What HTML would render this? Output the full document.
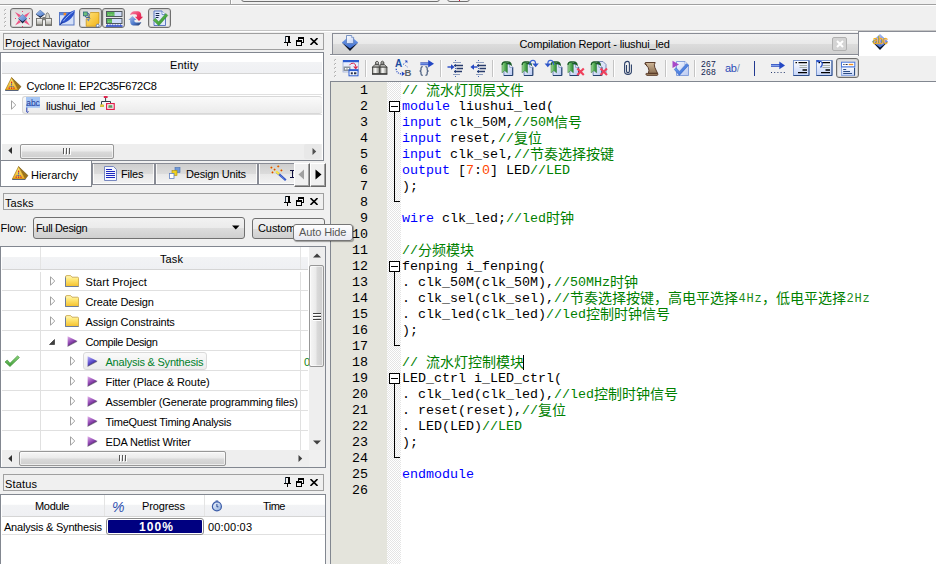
<!DOCTYPE html>
<html><head><meta charset="utf-8"><title>Quartus II</title>
<style>
html,body{margin:0;padding:0;}
body{width:936px;height:564px;overflow:hidden;position:relative;background:#f0f0f0;font-family:"Liberation Sans",sans-serif;font-size:11px;}
div,span.t,svg,pre{position:absolute;box-sizing:border-box;}
span.t{white-space:pre;line-height:13px;height:13px;}
.ttl{border:1px solid #a0a0a0;background:#f0f0f0;}
.pan{border:1px solid #828790;background:#fff;}
.hdr{background:linear-gradient(#fff 0,#fff 45%,#f2f3f5 46%,#eff0f3 100%);border-bottom:1px solid #d5d5d5;}
.hl{background:#e0e0e0;height:1px;}
.vl{background:#e0e0e0;width:1px;}
.sbt{border:1px solid #979797;border-radius:2px;background:linear-gradient(#f6f6f6,#eaeaea 48%,#dadada 52%,#cecece);box-shadow:inset 0 0 0 1px rgba(255,255,255,.6);}
.sbv{border:1px solid #979797;border-radius:2px;background:linear-gradient(90deg,#f6f6f6,#eaeaea 48%,#dadada 52%,#cecece);box-shadow:inset 0 0 0 1px rgba(255,255,255,.6);}
.tab{box-shadow:inset 1px 0 0 rgba(255,255,255,.8),inset -1px 0 0 rgba(255,255,255,.8),inset 0 -1px 0 rgba(255,255,255,.8);border:1px solid #898c95;background:linear-gradient(#cecece,#dcdcdc 50%,#e8e8e8 51%,#f3f3f3);}
.btn{border:1px solid #707070;border-radius:3px;background:linear-gradient(#f2f2f2,#ebebeb 50%,#dddddd 51%,#cfcfcf);}
.tb{border:1px solid #6f6f6f;border-radius:3px;background:linear-gradient(#dcdcdc,#efefef);box-shadow:inset 0 0 0 1px #cfcfcf;}
pre{margin:0;font-family:"Liberation Mono",monospace;font-size:13.333px;line-height:16px;height:16px;white-space:pre;color:#000;}
pre b{font-weight:normal;color:#0000ff;}
pre i{font-style:normal;color:#008000;}
pre u{text-decoration:none;color:#ff4500;}
pre .c{display:inline-block;position:relative;height:16px;vertical-align:top;font-family:"Liberation Mono","Noto Sans CJK SC",monospace;font-size:14px;line-height:16px;white-space:nowrap;color:#008000;}
pre .h{font-size:12px;letter-spacing:.8px;display:inline-block;width:24px;vertical-align:top;text-indent:.6px;color:#1a8a1a;}
.ln{text-align:right;width:38px;left:330px;}
</style></head><body>

<div style="left:0px;top:4px;width:936px;height:1px;background:#a0a0a0;"></div>
<div style="left:0px;top:5px;width:936px;height:1px;background:#fff;"></div>
<div style="left:230px;top:0px;width:1px;height:4px;background:#a0a0a0;"></div>
<div style="left:231px;top:0px;width:1px;height:4px;background:#fff;"></div>
<div style="left:241px;top:-10px;width:199px;height:12px;border:1px solid #707070;border-radius:3px;background:#f0f0f0;"></div>
<div style="left:447px;top:-10px;width:23px;height:12px;border:1px solid #707070;border-radius:3px;background:#f0f0f0;"></div>
<div style="left:459px;top:0px;width:1px;height:1px;background:#e0103a;"></div>
<div style="left:0px;top:30px;width:936px;height:1px;background:#c5c5c5;"></div>
<div style="left:0px;top:31px;width:936px;height:1px;background:#fff;"></div>
<div style="left:5px;top:9px;width:1px;height:1px;background:#b0b0b0;"></div>
<div style="left:4px;top:10px;width:1px;height:1px;background:#b8b8b8;"></div>
<div style="left:5px;top:10px;width:1px;height:1px;background:#fafafa;"></div>
<div style="left:4px;top:9px;width:1px;height:1px;background:#dcdcdc;"></div>
<div style="left:5px;top:13px;width:1px;height:1px;background:#b0b0b0;"></div>
<div style="left:4px;top:14px;width:1px;height:1px;background:#b8b8b8;"></div>
<div style="left:5px;top:14px;width:1px;height:1px;background:#fafafa;"></div>
<div style="left:4px;top:13px;width:1px;height:1px;background:#dcdcdc;"></div>
<div style="left:5px;top:17px;width:1px;height:1px;background:#b0b0b0;"></div>
<div style="left:4px;top:18px;width:1px;height:1px;background:#b8b8b8;"></div>
<div style="left:5px;top:18px;width:1px;height:1px;background:#fafafa;"></div>
<div style="left:4px;top:17px;width:1px;height:1px;background:#dcdcdc;"></div>
<div style="left:5px;top:21px;width:1px;height:1px;background:#b0b0b0;"></div>
<div style="left:4px;top:22px;width:1px;height:1px;background:#b8b8b8;"></div>
<div style="left:5px;top:22px;width:1px;height:1px;background:#fafafa;"></div>
<div style="left:4px;top:21px;width:1px;height:1px;background:#dcdcdc;"></div>
<div style="left:5px;top:25px;width:1px;height:1px;background:#b0b0b0;"></div>
<div style="left:4px;top:26px;width:1px;height:1px;background:#b8b8b8;"></div>
<div style="left:5px;top:26px;width:1px;height:1px;background:#fafafa;"></div>
<div style="left:4px;top:25px;width:1px;height:1px;background:#dcdcdc;"></div>
<div class="tb" style="left:10px;top:8px;width:23px;height:20px;"></div>
<div class="tb" style="left:79px;top:8px;width:23px;height:20px;"></div>
<div class="tb" style="left:102px;top:8px;width:23px;height:20px;"></div>
<div class="tb" style="left:148px;top:8px;width:23px;height:20px;"></div>
<svg style="left:0;top:6px" width="180" height="24" viewBox="0 6 180 24">
<defs>
<linearGradient id="dia" x1="0" y1="0" x2="1" y2="1"><stop offset="0" stop-color="#a8c4f0"/><stop offset="1" stop-color="#4a78c8"/></linearGradient>
<linearGradient id="yel" x1="0" y1="0" x2="1" y2="1"><stop offset="0" stop-color="#ffe27a"/><stop offset="1" stop-color="#f2b418"/></linearGradient>
<linearGradient id="grn" x1="0" y1="0" x2="1" y2="1"><stop offset="0" stop-color="#6cc858"/><stop offset="1" stop-color="#2c8c2c"/></linearGradient>
<linearGradient id="gry" x1="0" y1="0" x2="0" y2="1"><stop offset="0" stop-color="#fafafa"/><stop offset="1" stop-color="#a8a8a0"/></linearGradient>
</defs>
<!-- 1 -->
<g fill="#f0447a" opacity=".9"><path d="M15 12L18.9 17.6L20.9 15.3Z"/><path d="M30 12L24.1 15.3L26.1 17.6Z"/><path d="M15 25.6L20.9 22.3L18.9 20.0Z"/><path d="M30 25.6L26.1 20.0L24.1 22.3Z"/></g>
<g fill="#ee3f72"><rect x="22" y="11" width="1" height="1"/><rect x="22" y="26" width="1" height="1"/><rect x="15" y="18" width="1" height="1"/><rect x="29" y="18" width="1" height="1"/></g>
<path d="M22.6 14.3L27 18.8L22.6 23.6L18.2 18.8Z" fill="#14203c"/><path d="M22.6 14.3L27 18.6L22.6 21.6L18.2 18.6Z" fill="url(#dia)"/>
<!-- 2 -->
<path d="M40.3 10L44.9 14.2L40.3 18L35.8 14.2Z" fill="#14203c"/><path d="M40.3 10L44.9 14L40.3 16.4L35.8 14Z" fill="url(#dia)"/>
<rect x="36.5" y="18.5" width="6" height="6.5" fill="url(#gry)" stroke="#6a6a66" stroke-width=".9"/><rect x="45.5" y="18.5" width="6" height="6.5" fill="url(#gry)" stroke="#6a6a66" stroke-width=".9"/>
<path d="M45.5 18.5L46 14.5Q47.2 11 49 14.5L50 18.5Z" fill="#d4d4cc" stroke="#6a6a66" stroke-width=".8"/><rect x="42.5" y="17" width="3" height="3.2" fill="#7c7c78"/><path d="M36 25.3H43M45 25.3H52" stroke="#50504c" stroke-width=".8"/>
<!-- 3 -->
<rect x="59.5" y="12.5" width="14.5" height="12.5" fill="#d4e0f8" stroke="#5878c4"/><rect x="60" y="13" width="13.5" height="2.2" fill="#5a88e0"/><rect x="63.6" y="12.8" width="2.6" height="2.6" fill="#f08a28"/>
<path d="M60 24.8C61 19.5 66.5 12.5 74.8 10C75.2 15.5 69 22 62.2 23.6Z" fill="#2a50c8"/><path d="M63 21.5C66 17.5 70 14 73.5 11.5" stroke="#9cc0f8" stroke-width=".9" fill="none"/><path d="M59.8 25L63 21.5" stroke="#183088" stroke-width="1"/>
<!-- 4 -->
<path d="M90.5 12.5H99V23L96 26.3H86.2V19Z" fill="url(#yel)" stroke="#c08c10" stroke-width=".7"/><path d="M86.2 19V13H90.5Z" fill="#c4cce0"/>
<rect x="83.5" y="12" width="3.8" height="3.8" fill="#70c07c" stroke="#2a6c78" stroke-width=".8"/><path d="M87.5 13Q90 13.5 89 17L90 18.5M85 16Q85.5 18.5 89 17.5" stroke="#36588c" stroke-width="1" fill="none"/><path d="M86.5 19.5L90 18L88.8 21.5Z" fill="#6888b8"/>
<circle cx="97.7" cy="25.6" r="1.4" fill="#fff" stroke="#4468a8" stroke-width=".8"/>
<!-- 5 -->
<rect x="106.5" y="11.5" width="15.5" height="5" fill="#cfdcf8" stroke="#505860"/><rect x="107" y="12" width="7.5" height="4" fill="#58b458"/><path d="M108 14.8H113.5" stroke="#a8e0a0" stroke-width=".8" stroke-dasharray="1 .6"/>
<rect x="106.5" y="18.5" width="15.5" height="5" fill="#cfdcf8" stroke="#505860"/><rect x="107" y="19" width="5" height="4" fill="#58b458"/><path d="M108 21.8H111.5" stroke="#a8e0a0" stroke-width=".8" stroke-dasharray="1 .6"/>
<path d="M106 26H122.5" stroke="#1838c8" stroke-width="1.4"/><path d="M107 24.9H122" stroke="#1838c8" stroke-width=".9" stroke-dasharray="1 1.6"/>
<!-- 6 -->
<linearGradient id="rdg" x1="0" y1="0" x2="1" y2="1"><stop offset="0" stop-color="#f888a8"/><stop offset=".5" stop-color="#ec3864"/><stop offset="1" stop-color="#d81040"/></linearGradient>
<linearGradient id="blg" x1="0" y1="0" x2="1" y2="1"><stop offset="0" stop-color="#18305c"/><stop offset=".4" stop-color="#4c78cc"/><stop offset="1" stop-color="#b4c8ec"/></linearGradient>
<path id="swr" d="M130 14.9C131 12.5 132.5 11.2 134 11.2L138.2 11.2C140.6 11.5 141.5 14 141.3 16.7L143.1 16.7L139 20.9L134.9 16.7L137 16.7C137.2 15 136.5 14.2 135.2 14.2L133.5 14.2C132 14.2 131 14.5 130 14.9Z" fill="url(#rdg)"/>
<path transform="rotate(180 135.7 18.4)" d="M130 14.9C131 12.5 132.5 11.2 134 11.2L138.2 11.2C140.6 11.5 141.5 14 141.3 16.7L143.1 16.7L139 20.9L134.9 16.7L137 16.7C137.2 15 136.5 14.2 135.2 14.2L133.5 14.2C132 14.2 131 14.5 130 14.9Z" fill="url(#blg)"/>
<!-- 7 -->
<path d="M154 11H162L165.5 14.5V25.5H154Z" fill="#dfe8fb" stroke="#4c6cbc" stroke-width=".9"/><path d="M162 11V14.5H165.5" fill="#fff" stroke="#4c6cbc" stroke-width=".7"/>
<path d="M155.7 13.5H159.3M155.7 15.5H159.3M155.7 17.5H158.5" stroke="#182850" stroke-width="1"/>
<path d="M153.3 20.3L155.3 18.3L158.7 21.8L165.8 13.4L167.8 15.4L158.8 25.8Z" fill="url(#grn)" stroke="#2a7c24" stroke-width=".4"/>
</svg>
<div class="ttl" style="left:3px;top:33px;width:321px;height:17px;"></div>
<span class="t m" style="left:5px;top:37px;color:#000;font-size:11px;letter-spacing:0.04px;">Project Navigator</span>
<svg style="left:284px;top:36px;" width="7" height="10" viewBox="0 0 7 10"><g fill="#000" shape-rendering="crispEdges"><rect x="1" y="0" width="5" height="1"/><rect x="1" y="0" width="1" height="6" fill="#2c3c4c"/><rect x="4" y="0" width="2" height="6"/><rect x="0" y="6" width="7" height="1"/><rect x="3" y="7" width="1" height="3"/></g></svg>
<svg style="left:296px;top:37px;" width="8" height="9" viewBox="0 0 8 9"><g fill="#000" shape-rendering="crispEdges"><rect x="2" y="0" width="6" height="2"/><rect x="7" y="0" width="1" height="6"/><rect x="2" y="0" width="1" height="3"/><rect x="6" y="5" width="2" height="1"/><rect x="0" y="3" width="6" height="2"/><rect x="0" y="3" width="1" height="6"/><rect x="5" y="3" width="1" height="6"/><rect x="0" y="8" width="6" height="1"/></g></svg>
<svg style="left:310px;top:38px;" width="8" height="7" viewBox="0 0 8 7"><path d="M.5 .1L7.5 6.9M7.5 .1L.5 6.9" stroke="#000" stroke-width="1.6"/></svg>
<div style="left:0px;top:52px;width:324px;height:109px;border-bottom:1px solid #828790;border-top:1px solid #828790;border-right:1px solid #828790;border-left:1px solid #828790;background:#fff;"></div>
<div class="hdr" style="left:2px;top:53px;width:320px;height:21px;"></div>
<span class="t m" style="left:170px;top:59px;color:#000;font-size:11px;letter-spacing:0.18px;">Entity</span>
<div class="hl" style="left:2px;top:94px;width:320px;height:1px;"></div>
<div class="hl" style="left:2px;top:114px;width:320px;height:1px;"></div>
<svg style="left:5px;top:77px;" width="17" height="15" viewBox="0 0 17 15"><defs><linearGradient id="py77" x1="0" y1="0" x2="0" y2="1"><stop offset="0" stop-color="#fff27a"/><stop offset="1" stop-color="#f0ac1c"/></linearGradient></defs>
<path d="M6.6 .6L13.3 13L16 9.6Z" fill="#9c741c" stroke="#6c4c10" stroke-width=".5"/><path d="M6.6 .6L.4 13H13.3Z" fill="url(#py77)" stroke="#a47414" stroke-width=".7"/><path d="M.2 13.5H13.4" stroke="#58647c" stroke-width="1"/>
<rect x="6" y="4.6" width="1.2" height="1.6" fill="#e02020"/><path d="M6.6 6.4V8.4M5.4 9L4.4 10.4M7.8 9L8.8 10.4M6.6 9V10.4" stroke="#2848c0" stroke-width=".8"/><rect x="3.6" y="10.6" width="1.2" height="1.3" fill="#e02020"/><rect x="6" y="10.6" width="1.2" height="1.3" fill="#e02020"/><rect x="8.4" y="10.6" width="1.2" height="1.3" fill="#e02020"/></svg>
<span class="t m" style="left:26.5px;top:80px;color:#000;font-size:11px;letter-spacing:-0.21px;">Cyclone II: EP2C35F672C8</span>
<div style="left:22px;top:96px;width:300px;height:18px;border:1px solid #d8d8d8;border-radius:3px;background:linear-gradient(#fafafa,#ebebeb);border-right:none;"></div>
<svg style="left:11px;top:100px;" width="6" height="10" viewBox="0 0 6 10"><path d="M.5 .8L4.8 5L.5 9.2Z" fill="#fff" stroke="#a0a0a0"/></svg>
<svg style="left:26px;top:97px;" width="15" height="17" viewBox="0 0 15 17"><rect x="0" y="0" width="14" height="10.8" fill="#a6c6f4"/><text x="0.2" y="8.8" font-family="Liberation Sans" font-size="9.5" fill="#1c3898" textLength="13.6" lengthAdjust="spacingAndGlyphs">abc</text><path d="M0 8.4H14" stroke="#3c5cb8" stroke-width=".6"/>
<path d="M.8 10.5V15Q2 16 2.5 14.5" stroke="#2038b0" fill="none"/></svg>
<span class="t m" style="left:46px;top:100px;color:#000;font-size:11px;letter-spacing:-0.25px;">liushui_led</span>
<svg style="left:100px;top:95px" width="16" height="16" viewBox="100 95 16 16"><rect x="103.8" y="96" width="3.8" height="2" fill="#e02850"/>
<path d="M105.6 98V101.5M101.5 104.6V101.5H110.5V103" stroke="#34404c" fill="none" stroke-width="1"/>
<rect x="100.6" y="104.8" width="3.2" height="2" fill="#ecd028" stroke="#a89820" stroke-width=".4"/>
<rect x="106.6" y="103.6" width="7.6" height="5.8" fill="#fff" stroke="#e0204c" stroke-width="1.2"/><rect x="108.4" y="105.2" width="4" height="2.6" fill="#58a060"/><path d="M108.4 107.6H112.4" stroke="#8c9098" stroke-width=".6"/></svg>
<div style="left:2px;top:144px;width:320px;height:16px;background:#eeeeee;"></div>
<div class="sbt" style="left:20px;top:144px;width:94px;height:15px;"></div>
<svg style="left:62px;top:148px;" width="10" height="7" viewBox="0 0 10 7"><path d="M1.5 0V6M4.5 0V6M7.5 0V6" stroke="#585858" stroke-width="1"/><path d="M2.5 1V7M5.5 1V7M8.5 1V7" stroke="#fff" stroke-width="1"/></svg>
<svg style="left:8px;top:147px;" width="5" height="7" viewBox="0 0 5 7"><path d="M4 0V7L.3 3.5Z" fill="#303030"/></svg>
<div style="left:304px;top:144px;width:17px;height:15px;background:#e8e8e8;border-radius:2px;"></div>
<svg style="left:312px;top:148px;" width="5" height="7" viewBox="0 0 5 7"><path d="M.5 0V7L4.2 3.5Z" fill="#505050"/></svg>
<div class="tab" style="left:92px;top:163px;width:63px;height:22px;"></div>
<div class="tab" style="left:155px;top:163px;width:103px;height:22px;"></div>
<div class="tab" style="left:258px;top:163px;width:60px;height:22px;"></div>
<div style="left:0px;top:161px;width:92px;height:26px;background:#fff;border-left:1px solid #828790;border-right:1px solid #828790;border-bottom:1px solid #828790;"></div>
<svg style="left:12px;top:166px;" width="17" height="15" viewBox="0 0 17 15"><defs><linearGradient id="py166" x1="0" y1="0" x2="0" y2="1"><stop offset="0" stop-color="#fff27a"/><stop offset="1" stop-color="#f0ac1c"/></linearGradient></defs>
<path d="M6.6 .6L13.3 13L16 9.6Z" fill="#9c741c" stroke="#6c4c10" stroke-width=".5"/><path d="M6.6 .6L.4 13H13.3Z" fill="url(#py166)" stroke="#a47414" stroke-width=".7"/><path d="M.2 13.5H13.4" stroke="#58647c" stroke-width="1"/>
<rect x="6" y="4.6" width="1.2" height="1.6" fill="#e02020"/><path d="M6.6 6.4V8.4M5.4 9L4.4 10.4M7.8 9L8.8 10.4M6.6 9V10.4" stroke="#2848c0" stroke-width=".8"/><rect x="3.6" y="10.6" width="1.2" height="1.3" fill="#e02020"/><rect x="6" y="10.6" width="1.2" height="1.3" fill="#e02020"/><rect x="8.4" y="10.6" width="1.2" height="1.3" fill="#e02020"/></svg>
<span class="t m" style="left:31px;top:169px;color:#000;font-size:11px;letter-spacing:-0.01px;">Hierarchy</span>
<svg style="left:104px;top:166px;" width="14" height="16" viewBox="0 0 14 16"><path d="M.5 .5H9.5L12.5 3.5V14.5H.5Z" fill="#f4f6ff" stroke="#7888c0"/><path d="M2 3.5H8M2 5.5H11M2 7.5H11M2 9.5H11M2 11.5H11" stroke="#1c28c0" stroke-width="1"/></svg>
<span class="t m" style="left:121px;top:168px;color:#000;font-size:11px;letter-spacing:-0.18px;">Files</span>
<svg style="left:169px;top:167px;" width="12" height="12" viewBox="0 0 12 12"><rect x="6" y=".5" width="5" height="5" fill="#7098d8" stroke="#4870b0" stroke-width=".6"/><rect x="3" y="3.5" width="5" height="5" fill="#f0d020" stroke="#a89010" stroke-width=".6"/><rect x=".5" y="6.5" width="4.5" height="5" fill="#fff" stroke="#6080c0" stroke-width=".8"/></svg>
<span class="t m" style="left:186px;top:168px;color:#000;font-size:11px;letter-spacing:-0.21px;">Design Units</span>
<svg style="left:268px;top:163px" width="20" height="20" viewBox="268 163 20 20"><path d="M277 172.4L285.8 180.2" stroke="#2c50c8" stroke-width="2.2"/><path d="M277.5 173L286 180.6" stroke="#a8c0f0" stroke-width=".7" stroke-dasharray=".8 .8"/><path d="M276 171.4L279.2 174.2" stroke="#f8e448" stroke-width="2.4"/>
<g fill="#f0a018"><path d="M271.4 166.2L272.8 167.6L271.4 169L270 167.6Z"/><path d="M278.2 165L279.6 166.4L278.2 167.8L276.8 166.4Z"/><path d="M274.6 168.2L276 169.6L274.6 171L273.2 169.6Z"/><path d="M281.4 169L282.8 170.4L281.4 171.8L280 170.4Z"/><path d="M272.5 171L273.9 172.4L272.5 173.8L271.1 172.4Z"/></g>
<g fill="#d02020"><rect x="270.9" y="167.1" width="1" height="1"/><rect x="277.7" y="165.9" width="1" height="1"/><rect x="274.1" y="169.1" width="1" height="1"/><rect x="280.9" y="169.9" width="1" height="1"/><rect x="272" y="171.9" width="1" height="1"/></g></svg>
<svg style="left:290px;top:170px;" width="4" height="8" viewBox="0 0 4 8"><g fill="#101040" shape-rendering="crispEdges"><rect x="0" y="0" width="4" height="1"/><rect x="1.5" y="0" width="1" height="8"/><rect x="0" y="7" width="4" height="1"/></g></svg>
<div style="left:294px;top:163px;width:16px;height:24px;background:#f0f0f0;border-top:1px solid #fff;border-left:1px solid #fff;border-right:1px solid #696969;border-bottom:1px solid #696969;box-shadow:inset -1px -1px 0 #a0a0a0;"></div>
<div style="left:310px;top:163px;width:16px;height:24px;background:#f0f0f0;border-top:1px solid #fff;border-left:1px solid #fff;border-right:1px solid #696969;border-bottom:1px solid #696969;box-shadow:inset -1px -1px 0 #a0a0a0;"></div>
<svg style="left:298px;top:169px;" width="7" height="11" viewBox="0 0 7 11"><path d="M6 .5V10.5L.5 5.5Z" fill="#a0a0a0"/></svg>
<svg style="left:315px;top:169px;" width="7" height="11" viewBox="0 0 7 11"><path d="M.5 .5V10.5L6.5 5.5Z" fill="#000"/></svg>
<div class="ttl" style="left:3px;top:193px;width:321px;height:17px;"></div>
<span class="t m" style="left:5px;top:197px;color:#000;font-size:11px;letter-spacing:0.09px;">Tasks</span>
<svg style="left:284px;top:196px;" width="7" height="10" viewBox="0 0 7 10"><g fill="#000" shape-rendering="crispEdges"><rect x="1" y="0" width="5" height="1"/><rect x="1" y="0" width="1" height="6" fill="#2c3c4c"/><rect x="4" y="0" width="2" height="6"/><rect x="0" y="6" width="7" height="1"/><rect x="3" y="7" width="1" height="3"/></g></svg>
<svg style="left:296px;top:197px;" width="8" height="9" viewBox="0 0 8 9"><g fill="#000" shape-rendering="crispEdges"><rect x="2" y="0" width="6" height="2"/><rect x="7" y="0" width="1" height="6"/><rect x="2" y="0" width="1" height="3"/><rect x="6" y="5" width="2" height="1"/><rect x="0" y="3" width="6" height="2"/><rect x="0" y="3" width="1" height="6"/><rect x="5" y="3" width="1" height="6"/><rect x="0" y="8" width="6" height="1"/></g></svg>
<svg style="left:310px;top:198px;" width="8" height="7" viewBox="0 0 8 7"><path d="M.5 .1L7.5 6.9M7.5 .1L.5 6.9" stroke="#000" stroke-width="1.6"/></svg>
<span class="t m" style="left:0.5px;top:222px;color:#000;font-size:11px;letter-spacing:-0.07px;">Flow:</span>
<div class="btn" style="left:33px;top:217px;width:212px;height:22px;"></div>
<span class="t m" style="left:36px;top:222px;color:#000;font-size:11px;letter-spacing:-0.35px;">Full Design</span>
<svg style="left:232px;top:225px;" width="8" height="5" viewBox="0 0 8 5"><path d="M0 .5H7.5L3.75 4.5Z" fill="#000"/></svg>
<div class="btn" style="left:252px;top:218px;width:73px;height:21px;"></div>
<span class="t m" style="left:258px;top:222px;color:#000;font-size:11px;letter-spacing:-0.08px;">Custom</span>
<div style="left:0px;top:246px;width:326px;height:222px;border:1px solid #828790;border-left:1px solid #828790;background:#fff;"></div>
<div class="hdr" style="left:2px;top:247px;width:39px;height:23px;"></div>
<div class="hdr" style="left:41px;top:247px;width:260px;height:23px;"></div>
<div class="hdr" style="left:301px;top:247px;width:7px;height:23px;"></div>
<div style="left:40px;top:247px;width:1px;height:22px;background:#e4e4e4;"></div>
<div style="left:300px;top:247px;width:1px;height:22px;background:#e4e4e4;"></div>
<span class="t m" style="left:160px;top:253px;color:#000;font-size:11px;letter-spacing:0.12px;">Task</span>
<div class="hl" style="left:2px;top:290px;width:306px;height:1px;"></div>
<div class="hl" style="left:2px;top:310px;width:306px;height:1px;"></div>
<div class="hl" style="left:2px;top:330px;width:306px;height:1px;"></div>
<div class="hl" style="left:2px;top:350px;width:306px;height:1px;"></div>
<div class="hl" style="left:2px;top:370px;width:306px;height:1px;"></div>
<div class="hl" style="left:2px;top:390px;width:306px;height:1px;"></div>
<div class="hl" style="left:2px;top:410px;width:306px;height:1px;"></div>
<div class="hl" style="left:2px;top:430px;width:306px;height:1px;"></div>
<div class="hl" style="left:2px;top:450px;width:306px;height:1px;"></div>
<div class="vl" style="left:40px;top:272px;width:1px;height:178px;"></div>
<div class="vl" style="left:300px;top:272px;width:1px;height:178px;"></div>
<svg style="left:50px;top:276px;" width="6" height="10" viewBox="0 0 6 10"><path d="M.5 .8L4.8 5L.5 9.2Z" fill="#fff" stroke="#a0a0a0"/></svg>
<svg style="left:65px;top:275px;" width="14" height="13" viewBox="0 0 14 13"><defs><linearGradient id="fg" x1="0" y1="0" x2="0" y2="1"><stop offset="0" stop-color="#fff8c0"/><stop offset=".35" stop-color="#ffe878"/><stop offset="1" stop-color="#f4c02c"/></linearGradient></defs>
<path d="M.5 2Q.5 .6 1.8 .6H5.6L7 2.2H12.6Q13.5 2.2 13.5 3.2V11.5H.5Z" fill="url(#fg)" stroke="#c4a040" stroke-width=".8"/><path d="M.5 2.5V11.5H13.5" stroke="#6c7c9c" stroke-width="1" fill="none"/></svg>
<span class="t m" style="left:85.5px;top:276px;color:#000;font-size:11px;letter-spacing:0.07px;">Start Project</span>
<svg style="left:50px;top:296px;" width="6" height="10" viewBox="0 0 6 10"><path d="M.5 .8L4.8 5L.5 9.2Z" fill="#fff" stroke="#a0a0a0"/></svg>
<svg style="left:65px;top:295px;" width="14" height="13" viewBox="0 0 14 13"><defs><linearGradient id="fg" x1="0" y1="0" x2="0" y2="1"><stop offset="0" stop-color="#fff8c0"/><stop offset=".35" stop-color="#ffe878"/><stop offset="1" stop-color="#f4c02c"/></linearGradient></defs>
<path d="M.5 2Q.5 .6 1.8 .6H5.6L7 2.2H12.6Q13.5 2.2 13.5 3.2V11.5H.5Z" fill="url(#fg)" stroke="#c4a040" stroke-width=".8"/><path d="M.5 2.5V11.5H13.5" stroke="#6c7c9c" stroke-width="1" fill="none"/></svg>
<span class="t m" style="left:85.5px;top:296px;color:#000;font-size:11px;letter-spacing:-0.16px;">Create Design</span>
<svg style="left:50px;top:316px;" width="6" height="10" viewBox="0 0 6 10"><path d="M.5 .8L4.8 5L.5 9.2Z" fill="#fff" stroke="#a0a0a0"/></svg>
<svg style="left:65px;top:315px;" width="14" height="13" viewBox="0 0 14 13"><defs><linearGradient id="fg" x1="0" y1="0" x2="0" y2="1"><stop offset="0" stop-color="#fff8c0"/><stop offset=".35" stop-color="#ffe878"/><stop offset="1" stop-color="#f4c02c"/></linearGradient></defs>
<path d="M.5 2Q.5 .6 1.8 .6H5.6L7 2.2H12.6Q13.5 2.2 13.5 3.2V11.5H.5Z" fill="url(#fg)" stroke="#c4a040" stroke-width=".8"/><path d="M.5 2.5V11.5H13.5" stroke="#6c7c9c" stroke-width="1" fill="none"/></svg>
<span class="t m" style="left:85.5px;top:316px;color:#000;font-size:11px;letter-spacing:-0.14px;">Assign Constraints</span>
<svg style="left:49px;top:339px;" width="6" height="6" viewBox="0 0 6 6"><path d="M5.5 .5V5.5H.5Z" fill="#404040" stroke="#202020" stroke-width=".6"/></svg>
<svg style="left:67px;top:335.5px;" width="11" height="11" viewBox="0 0 11 11"><defs><linearGradient id="p67335" x1="0" y1="0" x2=".6" y2="1"><stop offset="0" stop-color="#e4b0ec"/><stop offset=".6" stop-color="#8c44b0"/><stop offset="1" stop-color="#38184c"/></linearGradient></defs>
<path d="M.6 .3L10.2 5.1L.6 10.2Z" fill="url(#p67335)"/><path d="M.6 10.4L10.2 5.3" stroke="#201430" stroke-width=".7" opacity=".7"/></svg>
<span class="t m" style="left:85.5px;top:336px;color:#000;font-size:11px;letter-spacing:-0.4px;">Compile Design</span>
<div style="left:83px;top:352px;width:124px;height:18px;border:1px solid #dadada;border-radius:3px;background:linear-gradient(#fafafa,#ececec);"></div>
<svg style="left:70px;top:356px;" width="6" height="10" viewBox="0 0 6 10"><path d="M.5 .8L4.8 5L.5 9.2Z" fill="#fff" stroke="#a0a0a0"/></svg>
<svg style="left:87px;top:355.5px;" width="11" height="11" viewBox="0 0 11 11"><defs><linearGradient id="p87355" x1="0" y1="0" x2=".6" y2="1"><stop offset="0" stop-color="#bcb4fc"/><stop offset=".6" stop-color="#5c4ccc"/><stop offset="1" stop-color="#241c60"/></linearGradient></defs>
<path d="M.6 .3L10.2 5.1L.6 10.2Z" fill="url(#p87355)"/><path d="M.6 10.4L10.2 5.3" stroke="#201430" stroke-width=".7" opacity=".7"/></svg>
<span class="t m" style="left:105.5px;top:356px;color:#00802a;font-size:11px;letter-spacing:-0.22px;">Analysis &amp; Synthesis</span>
<svg style="left:70px;top:376px;" width="6" height="10" viewBox="0 0 6 10"><path d="M.5 .8L4.8 5L.5 9.2Z" fill="#fff" stroke="#a0a0a0"/></svg>
<svg style="left:87px;top:375.5px;" width="11" height="11" viewBox="0 0 11 11"><defs><linearGradient id="p87375" x1="0" y1="0" x2=".6" y2="1"><stop offset="0" stop-color="#e4b0ec"/><stop offset=".6" stop-color="#8c44b0"/><stop offset="1" stop-color="#38184c"/></linearGradient></defs>
<path d="M.6 .3L10.2 5.1L.6 10.2Z" fill="url(#p87375)"/><path d="M.6 10.4L10.2 5.3" stroke="#201430" stroke-width=".7" opacity=".7"/></svg>
<span class="t m" style="left:105.5px;top:376px;color:#000;font-size:11px;letter-spacing:-0.08px;">Fitter (Place &amp; Route)</span>
<svg style="left:70px;top:396px;" width="6" height="10" viewBox="0 0 6 10"><path d="M.5 .8L4.8 5L.5 9.2Z" fill="#fff" stroke="#a0a0a0"/></svg>
<svg style="left:87px;top:395.5px;" width="11" height="11" viewBox="0 0 11 11"><defs><linearGradient id="p87395" x1="0" y1="0" x2=".6" y2="1"><stop offset="0" stop-color="#e4b0ec"/><stop offset=".6" stop-color="#8c44b0"/><stop offset="1" stop-color="#38184c"/></linearGradient></defs>
<path d="M.6 .3L10.2 5.1L.6 10.2Z" fill="url(#p87395)"/><path d="M.6 10.4L10.2 5.3" stroke="#201430" stroke-width=".7" opacity=".7"/></svg>
<span class="t m" style="left:105.5px;top:396px;color:#000;font-size:11px;letter-spacing:-0.17px;">Assembler (Generate programming files)</span>
<svg style="left:70px;top:416px;" width="6" height="10" viewBox="0 0 6 10"><path d="M.5 .8L4.8 5L.5 9.2Z" fill="#fff" stroke="#a0a0a0"/></svg>
<svg style="left:87px;top:415.5px;" width="11" height="11" viewBox="0 0 11 11"><defs><linearGradient id="p87415" x1="0" y1="0" x2=".6" y2="1"><stop offset="0" stop-color="#e4b0ec"/><stop offset=".6" stop-color="#8c44b0"/><stop offset="1" stop-color="#38184c"/></linearGradient></defs>
<path d="M.6 .3L10.2 5.1L.6 10.2Z" fill="url(#p87415)"/><path d="M.6 10.4L10.2 5.3" stroke="#201430" stroke-width=".7" opacity=".7"/></svg>
<span class="t m" style="left:105.5px;top:416px;color:#000;font-size:11px;letter-spacing:-0.26px;">TimeQuest Timing Analysis</span>
<svg style="left:70px;top:436px;" width="6" height="10" viewBox="0 0 6 10"><path d="M.5 .8L4.8 5L.5 9.2Z" fill="#fff" stroke="#a0a0a0"/></svg>
<svg style="left:87px;top:435.5px;" width="11" height="11" viewBox="0 0 11 11"><defs><linearGradient id="p87435" x1="0" y1="0" x2=".6" y2="1"><stop offset="0" stop-color="#e4b0ec"/><stop offset=".6" stop-color="#8c44b0"/><stop offset="1" stop-color="#38184c"/></linearGradient></defs>
<path d="M.6 .3L10.2 5.1L.6 10.2Z" fill="url(#p87435)"/><path d="M.6 10.4L10.2 5.3" stroke="#201430" stroke-width=".7" opacity=".7"/></svg>
<span class="t m" style="left:105.5px;top:436px;color:#000;font-size:11px;letter-spacing:-0.14px;">EDA Netlist Writer</span>
<span class="t m" style="left:304px;top:356px;color:#108420;font-size:11px;letter-spacing:0px;">0</span>
<svg style="left:4px;top:355px;" width="17" height="13" viewBox="0 0 17 13"><defs><linearGradient id="gck" x1="0" y1="0" x2="0" y2="1"><stop offset="0" stop-color="#8cd47c"/><stop offset="1" stop-color="#3c9c34"/></linearGradient></defs><path d="M1 7L3.2 5L6 8.2L13.6 .8L15.4 2.6L6 11.6Z" fill="url(#gck)" stroke="#3c8c34" stroke-width=".6"/></svg>
<div style="left:309px;top:247px;width:16px;height:203px;background:#eeeeee;"></div>
<div class="sbv" style="left:309px;top:265px;width:15px;height:102px;"></div>
<svg style="left:313px;top:312px;" width="8" height="9" viewBox="0 0 8 9"><path d="M0 1.5H8M0 4.5H8M0 7.5H8" stroke="#404040"/><path d="M0 2.5H8M0 5.5H8M0 8.5H8" stroke="#fff"/></svg>
<svg style="left:313px;top:253px;" width="8" height="5" viewBox="0 0 8 5"><path d="M0 4.5H8L4 .5Z" fill="#404040"/></svg>
<svg style="left:313px;top:440px;" width="8" height="5" viewBox="0 0 8 5"><path d="M0 .5H8L4 4.5Z" fill="#404040"/></svg>
<div style="left:2px;top:450px;width:307px;height:17px;background:#eeeeee;"></div>
<div style="left:309px;top:450px;width:16px;height:17px;background:#f0f0f0;"></div>
<div class="sbt" style="left:19px;top:451px;width:207px;height:15px;"></div>
<svg style="left:118px;top:455px;" width="10" height="7" viewBox="0 0 10 7"><path d="M1.5 0V6M4.5 0V6M7.5 0V6" stroke="#585858" stroke-width="1"/><path d="M2.5 1V7M5.5 1V7M8.5 1V7" stroke="#fff" stroke-width="1"/></svg>
<svg style="left:8px;top:455px;" width="5" height="7" viewBox="0 0 5 7"><path d="M4 0V7L.3 3.5Z" fill="#303030"/></svg>
<svg style="left:298px;top:455px;" width="5" height="7" viewBox="0 0 5 7"><path d="M.5 0V7L4.2 3.5Z" fill="#404040"/></svg>
<div class="ttl" style="left:3px;top:474px;width:321px;height:17px;"></div>
<span class="t m" style="left:5px;top:478px;color:#000;font-size:11px;letter-spacing:0.16px;">Status</span>
<svg style="left:284px;top:477px;" width="7" height="10" viewBox="0 0 7 10"><g fill="#000" shape-rendering="crispEdges"><rect x="1" y="0" width="5" height="1"/><rect x="1" y="0" width="1" height="6" fill="#2c3c4c"/><rect x="4" y="0" width="2" height="6"/><rect x="0" y="6" width="7" height="1"/><rect x="3" y="7" width="1" height="3"/></g></svg>
<svg style="left:296px;top:478px;" width="8" height="9" viewBox="0 0 8 9"><g fill="#000" shape-rendering="crispEdges"><rect x="2" y="0" width="6" height="2"/><rect x="7" y="0" width="1" height="6"/><rect x="2" y="0" width="1" height="3"/><rect x="6" y="5" width="2" height="1"/><rect x="0" y="3" width="6" height="2"/><rect x="0" y="3" width="1" height="6"/><rect x="5" y="3" width="1" height="6"/><rect x="0" y="8" width="6" height="1"/></g></svg>
<svg style="left:310px;top:479px;" width="8" height="7" viewBox="0 0 8 7"><path d="M.5 .1L7.5 6.9M7.5 .1L.5 6.9" stroke="#000" stroke-width="1.6"/></svg>
<div style="left:0px;top:494px;width:326px;height:80px;border:1px solid #828790;border-left:1px solid #828790;background:#fff;"></div>
<div class="hdr" style="left:2px;top:495px;width:102px;height:22px;"></div>
<div class="hdr" style="left:104px;top:495px;width:101px;height:22px;"></div>
<div class="hdr" style="left:205px;top:495px;width:120px;height:22px;"></div>
<div style="left:104px;top:495px;width:1px;height:21px;background:#e4e4e4;"></div>
<div style="left:204px;top:495px;width:1px;height:21px;background:#e4e4e4;"></div>
<span class="t m" style="left:35px;top:500px;color:#000;font-size:11px;letter-spacing:-0.32px;">Module</span>
<span class="t m" style="left:112px;top:501px;color:#3050b0;font-size:14px;letter-spacing:0px;font-style:italic;">%</span>
<span class="t m" style="left:142px;top:500px;color:#000;font-size:11px;letter-spacing:-0.15px;">Progress</span>
<span class="t m" style="left:263px;top:500px;color:#000;font-size:11px;letter-spacing:-0.52px;">Time</span>
<svg style="left:211px;top:499px;" width="12" height="13" viewBox="0 0 12 13"><defs><linearGradient id="clk" x1="0" y1="0" x2="1" y2="1"><stop offset="0" stop-color="#f4f8ff"/><stop offset="1" stop-color="#8cacdc"/></linearGradient></defs><rect x="4.6" y="1.2" width="2.6" height="2" fill="#7c94c4"/><circle cx="5.9" cy="7.4" r="4.5" fill="url(#clk)" stroke="#3c5ca8" stroke-width="1.2"/><path d="M5.9 5V7.8H7.4" stroke="#1c3c8c" fill="none" stroke-width=".9"/></svg>
<div class="hl" style="left:2px;top:534px;width:323px;height:1px;"></div>
<span class="t m" style="left:4px;top:521px;color:#000;font-size:11px;letter-spacing:-0.22px;">Analysis &amp; Synthesis</span>
<div style="left:106px;top:518px;width:98px;height:17px;border:1px solid #8c8c8c;border-radius:3px;background:#fff;"></div>
<div style="left:108px;top:520px;width:94px;height:13px;background:#000080;border-radius:1px;"></div>
<span class="t m" style="left:139px;top:521px;color:#fff;font-size:12px;letter-spacing:1.1px;font-weight:bold;">100%</span>
<span class="t m" style="left:208px;top:521px;color:#000;font-size:11px;letter-spacing:0.17px;">00:00:03</span>
<div style="left:332px;top:33px;width:527px;height:21px;border:1px solid #898c95;border-bottom:none;background:linear-gradient(#f0f0f0,#e9e9e9 50%,#dcdcdc 51%,#d0d0d0);"></div>
<div style="left:858px;top:31px;width:90px;height:25px;border:1px solid #898c95;border-bottom:none;background:#fff;"></div>
<div style="left:330px;top:54px;width:529px;height:1px;background:#898c95;"></div>
<span class="t m" style="left:519.5px;top:38px;color:#000;font-size:11px;letter-spacing:-0.18px;">Compilation Report - liushui_led</span>
<div style="left:832px;top:37px;width:15px;height:14px;border:1px solid #b0b0b0;border-radius:2px;background:#d4d4d4;"></div>
<svg style="left:836px;top:40px;" width="8" height="8" viewBox="0 0 8 8"><path d="M1 1L7 7M7 1L1 7" stroke="#fff" stroke-width="2"/></svg>
<svg style="left:340px;top:32px" width="20" height="22" viewBox="340 32 20 22"><defs><linearGradient id="dm1" x1="0" y1="0" x2="0" y2="1"><stop offset="0" stop-color="#80a8ec"/><stop offset="1" stop-color="#3c6cd0"/></linearGradient><linearGradient id="pg1" x1="0" y1="0" x2="1" y2="1"><stop offset="0" stop-color="#ffffff"/><stop offset="1" stop-color="#c0d0f4"/></linearGradient></defs>
<path d="M341.8 42.5L350 51L358.2 42.5L350 47Z" fill="#0c1428"/><path d="M350 35.5L358.2 42.5L350 48.4L341.8 42.5Z" fill="url(#dm1)"/>
<path d="M346.5 35.5H351.6L353.6 37.5V43.5H346.5Z" fill="url(#pg1)" stroke="#5c7cb8" stroke-width=".8"/><path d="M351.6 35.5V37.5H353.6" fill="#fff" stroke="#5c7cb8" stroke-width=".6"/></svg>
<svg style="left:870px;top:32px" width="20" height="20" viewBox="870 32 20 20"><defs><linearGradient id="dm2" x1="0" y1="0" x2="0" y2="1"><stop offset="0" stop-color="#98b8f0"/><stop offset="1" stop-color="#4470d0"/></linearGradient></defs>
<path d="M872 41.4L880 50L888 41.4L880 46.5Z" fill="#0c1428"/><path d="M880 34L888 41.4L880 47.6L872 41.4Z" fill="url(#dm2)"/>
<text x="873" y="44" font-family="Liberation Sans" font-size="11" fill="#f8b010" stroke="#f8b010" stroke-width=".35" textLength="15" lengthAdjust="spacingAndGlyphs">abc</text></svg>
<div style="left:330px;top:55px;width:528px;height:26px;background:#f0f0f0;border-top:1px solid #fff;"></div>
<div style="left:858px;top:56px;width:78px;height:25px;background:#f0f0f0;"></div>
<div style="left:335px;top:59px;width:1px;height:1px;background:#b0b0b0;"></div>
<div style="left:334px;top:60px;width:1px;height:1px;background:#b8b8b8;"></div>
<div style="left:335px;top:60px;width:1px;height:1px;background:#fafafa;"></div>
<div style="left:334px;top:59px;width:1px;height:1px;background:#dcdcdc;"></div>
<div style="left:335px;top:63px;width:1px;height:1px;background:#b0b0b0;"></div>
<div style="left:334px;top:64px;width:1px;height:1px;background:#b8b8b8;"></div>
<div style="left:335px;top:64px;width:1px;height:1px;background:#fafafa;"></div>
<div style="left:334px;top:63px;width:1px;height:1px;background:#dcdcdc;"></div>
<div style="left:335px;top:67px;width:1px;height:1px;background:#b0b0b0;"></div>
<div style="left:334px;top:68px;width:1px;height:1px;background:#b8b8b8;"></div>
<div style="left:335px;top:68px;width:1px;height:1px;background:#fafafa;"></div>
<div style="left:334px;top:67px;width:1px;height:1px;background:#dcdcdc;"></div>
<div style="left:335px;top:71px;width:1px;height:1px;background:#b0b0b0;"></div>
<div style="left:334px;top:72px;width:1px;height:1px;background:#b8b8b8;"></div>
<div style="left:335px;top:72px;width:1px;height:1px;background:#fafafa;"></div>
<div style="left:334px;top:71px;width:1px;height:1px;background:#dcdcdc;"></div>
<div style="left:335px;top:75px;width:1px;height:1px;background:#b0b0b0;"></div>
<div style="left:334px;top:76px;width:1px;height:1px;background:#b8b8b8;"></div>
<div style="left:335px;top:76px;width:1px;height:1px;background:#fafafa;"></div>
<div style="left:334px;top:75px;width:1px;height:1px;background:#dcdcdc;"></div>
<div style="left:365px;top:60px;width:1px;height:17px;background:#c4c4c4;"></div>
<div style="left:366px;top:60px;width:1px;height:17px;background:#fff;"></div>
<div style="left:440px;top:60px;width:1px;height:17px;background:#c4c4c4;"></div>
<div style="left:441px;top:60px;width:1px;height:17px;background:#fff;"></div>
<div style="left:492px;top:60px;width:1px;height:17px;background:#c4c4c4;"></div>
<div style="left:493px;top:60px;width:1px;height:17px;background:#fff;"></div>
<div style="left:613px;top:60px;width:1px;height:17px;background:#c4c4c4;"></div>
<div style="left:614px;top:60px;width:1px;height:17px;background:#fff;"></div>
<div style="left:665px;top:60px;width:1px;height:17px;background:#c4c4c4;"></div>
<div style="left:666px;top:60px;width:1px;height:17px;background:#fff;"></div>
<div style="left:694px;top:60px;width:1px;height:17px;background:#c4c4c4;"></div>
<div style="left:695px;top:60px;width:1px;height:17px;background:#fff;"></div>
<div style="left:754px;top:61px;width:1px;height:15px;background:#203890;"></div>
<div class="tb" style="left:836px;top:58px;width:23px;height:20px;"></div>
<svg style="left:336px;top:56px" width="528" height="24" viewBox="336 56 528 24">
<defs>
<linearGradient id="pg" x1="0" y1="0" x2="1" y2="1"><stop offset="0" stop-color="#f4f7ff"/><stop offset="1" stop-color="#b8c8f0"/></linearGradient>
<linearGradient id="dg" x1="0" y1="0" x2="0" y2="1"><stop offset="0" stop-color="#ffffff"/><stop offset="1" stop-color="#c4d4f8"/></linearGradient>
<linearGradient id="rb" x1="0" y1="0" x2="1" y2="0"><stop offset="0" stop-color="#a8dca0"/><stop offset=".5" stop-color="#58b058"/><stop offset="1" stop-color="#2c8434"/></linearGradient>
<linearGradient id="bn" x1="0" y1="0" x2="1" y2="0"><stop offset="0" stop-color="#a0a09c"/><stop offset=".4" stop-color="#fcfcfa"/><stop offset="1" stop-color="#84847f"/></linearGradient>
<linearGradient id="sc" x1="0" y1="0" x2="0" y2="1"><stop offset="0" stop-color="#d0b898"/><stop offset="1" stop-color="#8c7054"/></linearGradient>
<linearGradient id="ck" x1="0" y1="0" x2="1" y2="1"><stop offset="0" stop-color="#7cacf4"/><stop offset="1" stop-color="#2c60d0"/></linearGradient>
<linearGradient id="ar" x1="0" y1="0" x2="0" y2="1"><stop offset="0" stop-color="#1c38b0"/><stop offset=".5" stop-color="#88a8f0"/><stop offset="1" stop-color="#1c38b0"/></linearGradient>
</defs>
<!-- window -->
<rect x="343" y="60.5" width="15.5" height="11.5" fill="#e8eefc" stroke="#a0b0d8" stroke-width=".8"/><rect x="343" y="60" width="16" height="2.2" fill="#2c5cd0"/>
<rect x="343.5" y="66.5" width="7" height="4.5" fill="#8c949c"/><rect x="345" y="68" width="1.5" height="1.5" fill="#fff"/><rect x="347.5" y="68" width="1.5" height="1.5" fill="#fff"/>
<path d="M349.5 65.2Q350.5 62.8 353.5 63.2Q355.8 63.8 355.8 66.5" fill="none" stroke="#d8284c" stroke-width="1"/><path d="M353.2 66.5H358.2L355.7 69.6Z" fill="#d8284c"/>
<rect x="349" y="69.8" width="9" height="6" fill="#f8faff" stroke="#2c5cd0" stroke-width="1"/><rect x="349" y="69.5" width="9" height="1.6" fill="#2c5cd0"/><rect x="350.8" y="72.3" width="2" height="2" fill="#24304c"/><rect x="354" y="72.3" width="2.4" height="2" fill="#24304c"/>
<!-- binoculars -->
<g stroke="#3c3c3a" stroke-width=".8"><path d="M375.6 64.4V62Q377 60.3 378.4 62V64.4ZM381 64.4V62Q382.4 60.3 383.8 62V64.4Z" fill="url(#bn)"/>
<path d="M372.4 67.2L375 64.4H379L379.4 67.2ZM380 67.2L380.4 64.4H384.4L387 67.2Z" fill="#b4b4b0"/>
<rect x="372.4" y="67.2" width="7" height="6.4" fill="url(#bn)"/><rect x="380" y="67.2" width="7" height="6.4" fill="url(#bn)"/></g><path d="M372 74.2H379.8M379.6 74.2H387.4" stroke="#2c2c2c" stroke-width="1.1"/>
<!-- A->B -->
<text x="395" y="67.4" font-family="Liberation Sans" font-weight="bold" font-size="10" fill="#1c4ca0">A</text><text x="404.6" y="75.8" font-family="Liberation Sans" font-weight="bold" font-size="9.6" fill="#5c6468">B</text>
<path d="M396.2 68.8Q396.5 74 402 73.8" stroke="#2448c4" fill="none" stroke-dasharray="1.1 1.1" stroke-width="1.2"/><path d="M401.8 71.6L405 73.8L401.8 76Z" fill="#2448c4"/>
<path d="M403 64.5Q405.5 63 406.5 61" stroke="#2448c4" stroke-dasharray="1 1" stroke-width="1" fill="none"/><path d="M404.6 60.6H407.4V63.2Z" fill="#2448c4"/><path d="M405.5 65.5L407.5 67" stroke="#2448c4" stroke-dasharray="1 1"/>
<!-- braces arrow -->
<rect x="420.3" y="62.4" width="9" height="2.8" fill="url(#ar)"/><path d="M428.2 60L434 63.8L428.2 67.6Z" fill="#2448c4"/>
<path d="M422.8 66.6Q421 66.6 421 68.2V69.8Q421 71 419.6 71Q421 71 421 72.2V73.8Q421 75.4 422.8 75.4M425.4 66.6Q427.2 66.6 427.2 68.2V69.8Q427.2 71 428.6 71Q427.2 71 427.2 72.2V73.8Q427.2 75.4 425.4 75.4" fill="none" stroke="#506484" stroke-width="1.3"/>
<!-- indent -->
<path d="M455.5 60V77" stroke="#4468b8" stroke-dasharray="1 1"/><path d="M453 62.5H461M453 74.5H460" stroke="#8c9cbc"/><path d="M454 65.5H463M456.5 68.5H463M454 71.5H462" stroke="#283c6c" stroke-width="1.3"/>
<path d="M447.5 67H452" stroke="#2448c4" stroke-width="1.4"/><path d="M451 64.2L454.6 67L451 69.8Z" fill="#2448c4"/>
<!-- outdent -->
<path d="M478.5 60V77" stroke="#4468b8" stroke-dasharray="1 1"/><path d="M476 62.5H484M476 74.5H483" stroke="#8c9cbc"/><path d="M477 65.5H486M479.5 68.5H486M477 71.5H485" stroke="#283c6c" stroke-width="1.3"/>
<path d="M473 67H477.5" stroke="#2448c4" stroke-width="1.4"/><path d="M474 64.2L470.4 67L474 69.8Z" fill="#2448c4"/>
<!-- bookmarks -->
<g transform="translate(501.4,0)"><path d="M2.5 64.3H8.3L11.3 67.3V75.5H2.5Z" fill="url(#pg)" stroke="#5470a8" stroke-width=".8"/><path d="M11.3 67.3V75.5H2.5" fill="none" stroke="#24406c" stroke-width="1"/><path d="M8.3 64.3V67.3H11.3" fill="#fff" stroke="#5470a8" stroke-width=".6"/>
<path d="M.6 72.8V64.6Q.6 62 3.3 62Q6 62 6 64.6V72.8L3.3 70.6Z" fill="url(#rb)" stroke="#2c7434" stroke-width=".5"/><path d="M.7 65Q.7 61.9 4 61.9H6.4Q9.4 62 9.8 64.8L7.6 63.4H5" fill="none" stroke="#1c5c28" stroke-width="1.2"/></g>
<g transform="translate(521.5,0)"><path d="M2.5 64.3H8.3L11.3 67.3V75.5H2.5Z" fill="url(#pg)" stroke="#5470a8" stroke-width=".8"/><path d="M11.3 67.3V75.5H2.5" fill="none" stroke="#24406c" stroke-width="1"/><path d="M8.3 64.3V67.3H11.3" fill="#fff" stroke="#5470a8" stroke-width=".6"/>
<path d="M.6 72.8V64.6Q.6 62 3.3 62Q6 62 6 64.6V72.8L3.3 70.6Z" fill="url(#rb)" stroke="#2c7434" stroke-width=".5"/><path d="M.7 65Q.7 61.9 4 61.9H6.4Q9.4 62 9.8 64.8L7.6 63.4H5" fill="none" stroke="#1c5c28" stroke-width="1.2"/></g><path d="M529.8 65Q529.8 60.4 533 60.4Q535.6 60.4 535.6 64" stroke="#3c64d4" fill="none" stroke-width="1.2"/><path d="M532.3 63.6H538.8L535.6 67.2Z" fill="#2c54c8"/>
<g transform="translate(550.5,0)"><path d="M2.5 64.3H8.3L11.3 67.3V75.5H2.5Z" fill="url(#pg)" stroke="#5470a8" stroke-width=".8"/><path d="M11.3 67.3V75.5H2.5" fill="none" stroke="#24406c" stroke-width="1"/><path d="M8.3 64.3V67.3H11.3" fill="#fff" stroke="#5470a8" stroke-width=".6"/>
<path d="M.6 72.8V64.6Q.6 62 3.3 62Q6 62 6 64.6V72.8L3.3 70.6Z" fill="url(#rb)" stroke="#2c7434" stroke-width=".5"/><path d="M.7 65Q.7 61.9 4 61.9H6.4Q9.4 62 9.8 64.8L7.6 63.4H5" fill="none" stroke="#1c5c28" stroke-width="1.2"/></g><path d="M553.6 65Q553.6 60.4 550.4 60.4Q547.8 60.4 547.8 64" stroke="#3c64d4" fill="none" stroke-width="1.2"/><path d="M544.6 63.6H551.1L547.8 67.2Z" fill="#2c54c8"/>
<g transform="translate(567.3,0)"><path d="M2.5 64.3H8.3L11.3 67.3V75.5H2.5Z" fill="url(#pg)" stroke="#5470a8" stroke-width=".8"/><path d="M11.3 67.3V75.5H2.5" fill="none" stroke="#24406c" stroke-width="1"/><path d="M8.3 64.3V67.3H11.3" fill="#fff" stroke="#5470a8" stroke-width=".6"/>
<path d="M.6 72.8V64.6Q.6 62 3.3 62Q6 62 6 64.6V72.8L3.3 70.6Z" fill="url(#rb)" stroke="#2c7434" stroke-width=".5"/><path d="M.7 65Q.7 61.9 4 61.9H6.4Q9.4 62 9.8 64.8L7.6 63.4H5" fill="none" stroke="#1c5c28" stroke-width="1.2"/></g><path d="M577.3 68.5L583.8 75M583.8 68.5L577.3 75" stroke="#f0405c" stroke-width="2.1"/>
<path d="M597.5 61.5H603L606 64.5V73" fill="#dce4f8" stroke="#5c74a8" stroke-width=".8"/>
<g transform="translate(590.6,0)"><path d="M2.5 64.3H8.3L11.3 67.3V75.5H2.5Z" fill="url(#pg)" stroke="#5470a8" stroke-width=".8"/><path d="M11.3 67.3V75.5H2.5" fill="none" stroke="#24406c" stroke-width="1"/><path d="M8.3 64.3V67.3H11.3" fill="#fff" stroke="#5470a8" stroke-width=".6"/>
<path d="M.6 72.8V64.6Q.6 62 3.3 62Q6 62 6 64.6V72.8L3.3 70.6Z" fill="url(#rb)" stroke="#2c7434" stroke-width=".5"/><path d="M.7 65Q.7 61.9 4 61.9H6.4Q9.4 62 9.8 64.8L7.6 63.4H5" fill="none" stroke="#1c5c28" stroke-width="1.2"/></g><path d="M600.5 68.5L607.0 75M607.0 68.5L600.5 75" stroke="#f0405c" stroke-width="2.1"/>
<!-- paperclip -->
<path d="M626.5 65V71.3Q626.5 72.6 628 72.6Q629.4 72.6 629.4 71.3V63.8Q629.4 61.4 627.6 61.4Q624.6 61.4 624.6 64.5V71.6Q624.6 74.4 628 74.4Q631.4 74.4 631.4 71.6V64.5" fill="none" stroke="#2c4068" stroke-width="1.1"/>
<!-- scroll -->
<path d="M645.5 62.5H655.2Q653.6 64.6 654.8 67.4L657.6 73.4H648.4Q649.6 70.4 648.2 67.6L645.8 64.6Q644.6 63.4 645.5 62.5Z" fill="url(#sc)" stroke="#4c2c1c" stroke-width=".9"/>
<path d="M645.3 62.7Q644.3 64.8 647 65.2" fill="none" stroke="#4c2c1c" stroke-width=".8"/><path d="M646.2 73.4H657.6Q658.8 74.8 657 75.4H647Q645 74.6 646.2 73.4Z" fill="#9c8060" stroke="#4c2c1c" stroke-width=".8"/>
<!-- check / arrow -->
<path d="M676.5 61.5H685L688.5 65V75.5H676.5Z" fill="url(#pg)" stroke="#7c98d8" stroke-width=".9"/><path d="M685 61.5V65H688.5" fill="#fff" stroke="#7c98d8" stroke-width=".7"/>
<path d="M672.5 60.8L679 64.4L672.5 68Z" fill="#a848c8"/>
<path d="M674.2 69.4L676 67.6L679.4 71.4L686.6 63.6L688.4 65.4L679.4 75.4Z" fill="url(#ck)" stroke="#2450b4" stroke-width=".4"/>
<!-- arrow w/ dots -->
<rect x="771" y="64" width="9.5" height="2.8" fill="url(#ar)"/><path d="M779.3 61.6L785 65.4L779.3 69.2Z" fill="#2448c4"/>
<path d="M771 72.5H785" stroke="#24386c" stroke-dasharray="1 2.2"/>
<g transform="translate(793,0)"><rect x=".5" y="60.5" width="15.5" height="15" fill="url(#dg)" stroke="#7c98d0"/><path d="M16 60.5V75.5H.5" fill="none" stroke="#2c4c88"/>
<path d="M2.5 62.6H4M5.5 62.6H14" stroke="#000" stroke-width="1.3"/><path d="M6.5 65.5H14M6.5 67.5H14" stroke="#a0a8a0" stroke-width=".9"/><path d="M9.5 70H14M5 72.6H14" stroke="#000" stroke-width="1.3"/></g>
<g transform="translate(816,0)"><rect x=".5" y="60.5" width="15.5" height="15" fill="url(#dg)" stroke="#7c98d0"/><path d="M16 60.5V75.5H.5" fill="none" stroke="#2c4c88"/>
<path d="M2.5 62.6H4M5.5 62.6H14" stroke="#000" stroke-width="1.3"/><path d="M6.5 65.5H14M6.5 67.5H14" stroke="#a0a8a0" stroke-width=".9"/><path d="M9.5 70H14M5 72.6H14" stroke="#000" stroke-width="1.3"/><path d="M.5 61.5Q6 60.5 6.4 63.5Q6.4 65.5 4.5 67.5" stroke="#2c54c8" fill="none" stroke-width="1.3"/><path d="M0 60H3V63Z" fill="#2c54c8"/></g>
<!-- selected -->
<rect x="841.5" y="67" width="13" height="8.5" fill="url(#dg)" stroke="#7c9ce0" stroke-width=".8"/><path d="M854.6 68V75.6" stroke="#244478" stroke-width="1"/>
<rect x="841.5" y="62.2" width="13.3" height="4.6" fill="#fff" stroke="#4878e0" stroke-width="1"/><path d="M843.3 64.5H844.5M845.6 64.5H847.6" stroke="#24304c" stroke-width="1.1"/><path d="M848.8 64.5H853.2" stroke="#f4901c" stroke-width="1.3"/>
<path d="M843.2 69.5H846.2M843.2 71.5H850M843.2 73.5H852" stroke="#2c4c84" stroke-width="1"/>
</svg>
<span class="t" style="left:701px;top:60px;font-size:8.5px;line-height:8px;height:8px;color:#101c50;letter-spacing:.3px;">267</span>
<span class="t" style="left:701px;top:68px;font-size:8.5px;line-height:8px;height:8px;color:#101c50;letter-spacing:.3px;">268</span>
<span class="t" style="left:725px;top:62px;font-size:11px;color:#2c4cb8;letter-spacing:-.3px;">ab<span style="color:#8090b8">/</span></span>
<div style="left:330px;top:81px;width:620px;height:500px;border:1px solid #828790;background:#fff;"></div>
<div style="left:331px;top:82px;width:56px;height:482px;background:#e4e4dc;"></div>
<div style="left:387px;top:82px;width:14px;height:482px;background:#fff;background-image:linear-gradient(45deg,#e4e4e4 25%,transparent 25%,transparent 75%,#e4e4e4 75%),linear-gradient(45deg,#e4e4e4 25%,transparent 25%,transparent 75%,#e4e4e4 75%);background-size:2px 2px;background-position:0 0,1px 1px;"></div>
<pre class="ln" style="top:83px">1</pre>
<pre style="left:402px;top:83px"><i>// <span class="c" style="width:98px">流水灯顶层文件</span></i></pre>
<pre class="ln" style="top:99px">2</pre>
<pre style="left:402px;top:99px"><b>module</b> liushui_led(</pre>
<pre class="ln" style="top:115px">3</pre>
<pre style="left:402px;top:115px"><b>input</b> clk_50M,<i>//50M<span class="c" style="width:28px">信号</span></i></pre>
<pre class="ln" style="top:131px">4</pre>
<pre style="left:402px;top:131px"><b>input</b> reset,<i>//<span class="c" style="width:28px">复位</span></i></pre>
<pre class="ln" style="top:147px">5</pre>
<pre style="left:402px;top:147px"><b>input</b> clk_sel,<i>//<span class="c" style="width:84px">节奏选择按键</span></i></pre>
<pre class="ln" style="top:163px">6</pre>
<pre style="left:402px;top:163px"><b>output</b> [<u>7</u>:<u>0</u>] LED<i>//LED</i></pre>
<pre class="ln" style="top:179px">7</pre>
<pre style="left:402px;top:179px">);</pre>
<pre class="ln" style="top:195px">8</pre>
<pre class="ln" style="top:211px">9</pre>
<pre style="left:402px;top:211px"><b>wire</b> clk_led;<i>//led<span class="c" style="width:28px">时钟</span></i></pre>
<pre class="ln" style="top:227px">10</pre>
<pre class="ln" style="top:243px">11</pre>
<pre style="left:402px;top:243px"><i>//<span class="c" style="width:56px">分频模块</span></i></pre>
<pre class="ln" style="top:259px">12</pre>
<pre style="left:402px;top:259px">fenping i_fenping(</pre>
<pre class="ln" style="top:275px">13</pre>
<pre style="left:402px;top:275px">. clk_50M(clk_50M),<i>//50MHz<span class="c" style="width:28px">时钟</span></i></pre>
<pre class="ln" style="top:291px">14</pre>
<pre style="left:402px;top:291px">. clk_sel(clk_sel),<i>//<span class="c" style="width:168px">节奏选择按键，高电平选择</span><span class="h">4Hz</span><span class="c" style="width:84px">，低电平选择</span><span class="h">2Hz</span></i></pre>
<pre class="ln" style="top:307px">15</pre>
<pre style="left:402px;top:307px">. clk_led(clk_led)<i>//led<span class="c" style="width:84px">控制时钟信号</span></i></pre>
<pre class="ln" style="top:323px">16</pre>
<pre style="left:402px;top:323px">);</pre>
<pre class="ln" style="top:339px">17</pre>
<pre class="ln" style="top:355px">18</pre>
<pre style="left:402px;top:355px"><i>// <span class="c" style="width:98px">流水灯控制模块</span></i></pre>
<pre class="ln" style="top:371px">19</pre>
<pre style="left:402px;top:371px">LED_ctrl i_LED_ctrl(</pre>
<pre class="ln" style="top:387px">20</pre>
<pre style="left:402px;top:387px">. clk_led(clk_led),<i>//led<span class="c" style="width:84px">控制时钟信号</span></i></pre>
<pre class="ln" style="top:403px">21</pre>
<pre style="left:402px;top:403px">. reset(reset),<i>//<span class="c" style="width:28px">复位</span></i></pre>
<pre class="ln" style="top:419px">22</pre>
<pre style="left:402px;top:419px">. LED(LED)<i>//LED</i></pre>
<pre class="ln" style="top:435px">23</pre>
<pre style="left:402px;top:435px">);</pre>
<pre class="ln" style="top:451px">24</pre>
<pre class="ln" style="top:467px">25</pre>
<pre style="left:402px;top:467px"><b>endmodule</b></pre>
<pre class="ln" style="top:483px">26</pre>
<div style="left:389px;top:101px;width:11px;height:11px;border:1px solid #000;background:#fff;"></div>
<div style="left:391px;top:106px;width:7px;height:1px;background:#000;"></div>
<div style="left:394px;top:112px;width:1px;height:89px;background:#000;"></div>
<div style="left:394px;top:201px;width:6px;height:1px;background:#000;"></div>
<div style="left:389px;top:261px;width:11px;height:11px;border:1px solid #000;background:#fff;"></div>
<div style="left:391px;top:266px;width:7px;height:1px;background:#000;"></div>
<div style="left:394px;top:272px;width:1px;height:73px;background:#000;"></div>
<div style="left:394px;top:345px;width:6px;height:1px;background:#000;"></div>
<div style="left:389px;top:373px;width:11px;height:11px;border:1px solid #000;background:#fff;"></div>
<div style="left:391px;top:378px;width:7px;height:1px;background:#000;"></div>
<div style="left:394px;top:384px;width:1px;height:73px;background:#000;"></div>
<div style="left:394px;top:457px;width:6px;height:1px;background:#000;"></div>
<div style="left:523px;top:355px;width:1px;height:15px;background:#000;"></div>
<div style="left:293px;top:224px;width:60px;height:17px;border:1px solid #767676;border-radius:3px;background:linear-gradient(#fff,#e8e9f2);box-shadow:1px 1px 1px rgba(0,0,0,.35);"></div>
<span class="t m" style="left:299px;top:226px;color:#575757;font-size:11px;letter-spacing:-0.11px;">Auto Hide</span>
</body></html>
